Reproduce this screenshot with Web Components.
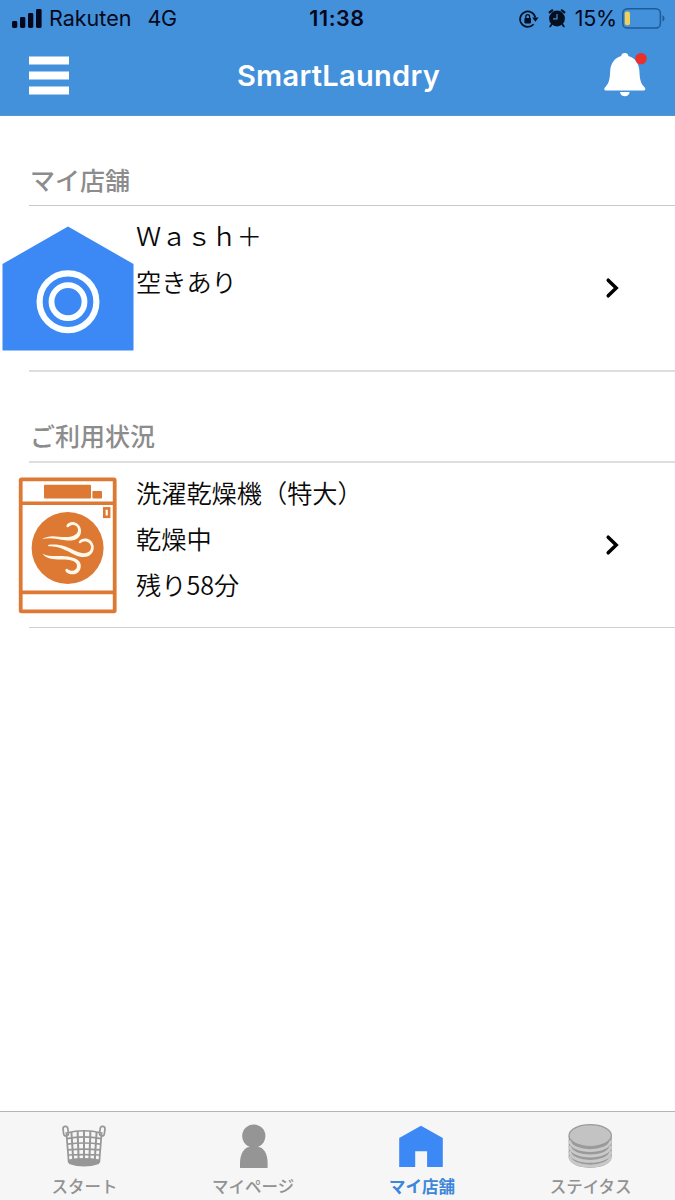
<!DOCTYPE html>
<html lang="ja">
<head>
<meta charset="utf-8">
<title>SmartLaundry</title>
<style>
   body {
      display: flex;
      flex-direction: column;

      height: 1200px;
      margin: 0;

      overflow: hidden;

      color: #0A0A0A;
      background-color: #FFFFFF;

      font-family: "Noto Sans CJK JP", sans-serif;
   }

   main {
      flex: 1;
   }

   .shops {
      --heading-rule: 1px solid #C8C8C8;
      --row-rule: 2px solid #DEDEDE;
   }

   .usage {
      --heading-rule: 2px solid #DEDEDE;
      --row-rule: 1px solid #D0D0D0;
   }
</style>
</head>
<body>
<status-bar carrier="Rakuten" network="4G" time="11:38" battery="15%"></status-bar>
<app-header>SmartLaundry</app-header>

<main>
   <list-section class="shops" heading="マイ店舗">
      <list-row>
         <app-icon slot="icon" name="shop" width="132" height="125"></app-icon>
         <div>Ｗａｓｈ＋</div>
         <div>空きあり</div>
      </list-row>
   </list-section>

   <list-section class="usage" heading="ご利用状況">
      <list-row>
         <app-icon slot="icon" name="dryer" width="100" height="137"></app-icon>
         <div>洗濯乾燥機（特大）</div>
         <div>乾燥中</div>
         <div>残り58分</div>
      </list-row>
   </list-section>
</main>

<tab-bar>
   <tab-item icon="basket">スタート</tab-item>
   <tab-item icon="person">マイページ</tab-item>
   <tab-item icon="home" active>マイ店舗</tab-item>
   <tab-item icon="coins">ステイタス</tab-item>
</tab-bar>

<script>
// All the drawings, by name
const ICONS = {
   signal: ["0 0 30 19", `
      <g fill="#03081C">
         <rect x="0" y="12" width="5.3" height="7" rx="1.4"/>
         <rect x="8" y="8" width="5.3" height="11" rx="1.4"/>
         <rect x="16" y="4" width="5.3" height="15" rx="1.4"/>
         <rect x="24" y="0" width="5.6" height="19" rx="1.4"/>
      </g>`],

   lock: ["0 0 20 18", `
      <path d="M16.3 7.5A7.7 7.7 0 1 0 14.6 14.2" fill="none" stroke="#04101F" stroke-width="1.7"/>
      <path d="M13.2 7.6H19.6L16.4 11.8Z" fill="#04101F"/>
      <rect x="5.4" y="8" width="6.6" height="5.4" rx=".8" fill="#04101F"/>
      <path d="M6.8 8.5V6.8a1.9 2.2 0 0 1 3.8 0V8.5" fill="none" stroke="#04101F" stroke-width="1.3"/>`],

   alarm: ["0 0 18 19", `
      <circle cx="9" cy="9.5" r="7.9" fill="#04101F"/>
      <path d="M1.6 3.4L4.2 1.3M16.4 3.4L13.8 1.3" stroke="#04101F" stroke-width="2.2" stroke-linecap="round"/>
      <path d="M4 14.8L2.2 17.4M14 14.8L15.8 17.4" stroke="#04101F" stroke-width="1.8" stroke-linecap="round"/>
      <path d="M9 5V9.8H5" fill="none" stroke="#4391DA" stroke-width="1.2"/>`],

   battery: ["0 0 43 21", `
      <rect x=".8" y=".8" width="37.6" height="19.2" rx="4.6" fill="none" stroke="#1D5A96" stroke-width="1.5"/>
      <path d="M40.5 7.2Q42.5 8 42.5 10.4T40.5 13.6Z" fill="#1D5A96"/>
      <rect x="2.8" y="3.6" width="5.2" height="13.6" rx="2" fill="#F0CF5A"/>`],

   menu: ["0 0 40 39", `
      <path d="M0 4.5H40M0 19.5H40M0 34.5H40" stroke="#FFFFFF" stroke-width="8"/>`],

   bell: ["0 0 44 44", `
      <path d="M20.8 0C18.6 0 17.5 1.3 17.2 2.9C10 5.1 6.6 10.8 6.2 17.8C5.9 26.5 4.8 31 .9 34.4C-.3 35.6 .2 37.5 2 37.5H39.6C41.4 37.5 41.9 35.6 40.7 34.4C36.8 31 35.7 26.5 35.4 17.8C35 10.8 31.6 5.1 24.4 2.9C24.1 1.3 23 0 20.8 0Z" fill="#FFFFFF"/>
      <path d="M16 38.9H25.6Q24.8 43.3 20.8 43.3T16 38.9Z" fill="#FFFFFF"/>
      <circle cx="37" cy="5.6" r="5.7" fill="#E9302D"/>`],

   shop: ["0 0 132 125", `
      <path d="M66 .5L131.5 38V124.5H.5V38Z" fill="#3C89F5"/>
      <g fill="none" stroke="#FAFEFF">
         <circle cx="66" cy="75.7" r="28.4" stroke-width="6.2"/>
         <circle cx="66" cy="75.7" r="16.5" stroke-width="5.8"/>
      </g>`],

   dryer: ["0 0 100 137", `
      <rect x="2.7" y="2.4" width="94" height="132" rx=".8" fill="#FFFFFF" stroke="#DD7933" stroke-width="3.8"/>
      <path d="M2 26.2H97M2 115.4H97" stroke="#DD7933" stroke-width="3.6"/>
      <rect x="26" y="7.7" width="47" height="13.8" rx="1" fill="#DD7933"/>
      <rect x="74.4" y="14" width="9.6" height="7.6" rx=".8" fill="#DD7933"/>
      <rect x="86.3" y="31.4" width="4.8" height="8.4" fill="#FFFFFF" stroke="#DD7933" stroke-width="2.6"/>
      <circle cx="49.6" cy="71" r="36" fill="#DD7933"/>
      <g fill="#FFF8E8">
         <path d="M24 62.3C32 57 39 60 47 60.1C56 60.3 60.3 56.5 60 52.4C59.7 48.2 54.2 46.5 50.8 49.8C50 50.7 48 50 48.4 48.7C49.7 45.2 53.8 44.3 57 45.4C62 47.2 64.2 52.5 62.5 57.2C60.2 63.4 53.5 64.2 47.3 63.3C39 62.1 32 59.9 24 62.3Z"/>
         <path d="M30.6 67.7C42 66.7 49 69.5 57 73.7C65 77.9 72.7 76.7 73 70.6C73.2 65.5 67.3 62.7 62.7 66C61.8 66.7 60.3 65.8 60.8 64.7C63.1 60.7 69.2 60.6 72.5 63.4C76.5 66.7 76.8 72.6 73.7 76.5C69.9 81.4 62.5 80.7 56.5 77.7C48 73.2 41 68.9 30.6 69.2Q29.3 68.5 30.6 67.7Z"/>
         <path d="M24.4 76.4C31 80.3 39 78.4 47 79.2C56 79.8 62.7 82.6 62.8 88.5C63 94.5 58.2 98.2 53 97.2C49.3 96.6 46.5 94.3 47.6 92.5C48.2 91.2 49.6 92 50.4 92.8C54 95.2 59 93.3 59 88.7C59 84.3 53 82.8 47 82.5C38 82.2 29 83.1 24.4 76.4Z"/>
      </g>`],

   chevron: ["0 0 13 20", `
      <path d="M2.2 2.2L10.2 10L2.2 17.8" fill="none" stroke="#000000" stroke-width="3.5" stroke-linecap="round"/>`],

   basket: ["0 0 44 44", `
      <g fill="none" stroke="#979797" stroke-width="1.7">
         <rect x="1.3" y="2.4" width="4.8" height="9.6" rx="2.4" transform="rotate(-8 3.7 7)"/>
         <rect x="37.9" y="2.4" width="4.8" height="9.6" rx="2.4" transform="rotate(8 40.3 7)"/>
         <path d="M4.4 9Q22 4.5 39.6 9L37.3 38Q22 43 6.7 38Z"/>
         <path d="M4.8 14.6Q22 11 39.2 14.6M5.3 20.2Q22 17.8 38.7 20.2M5.8 25.8Q22 24.6 38.2 25.8M6.2 31Q22 30.4 37.8 31"/>
         <path d="M9.4 8L11.4 38M15.6 7L16.7 38M22 6.5V38M28.4 7L27.3 38M34.6 8L32.6 38" stroke-width="2"/>
      </g>
      <path d="M6.4 35.4Q22 32.8 37.6 35.4L37 40Q22 45 7 40Z" fill="#979797"/>`],

   person: ["0 0 44 44", `
      <circle cx="22.8" cy="12" r="11.6" fill="#959595"/>
      <path d="M9 44V39C9 29 14 23 18.6 23H27C32 23 36.6 29 36.6 39V44Z" fill="#959595"/>`],

   home: ["0 0 44 44", `
      <path d="M21 1.8L42.8 14V43H27.1V27.2H15.2V43H-.8V14Z" fill="#3C89F5"/>`],

   coins: ["0 0 44 44", `
      <path d="M-.3 12V32.6C-.3 47.6 42.7 47.6 42.7 32.6V12Z" fill="#9A9A9A"/>
      <g fill="none" stroke="#C9C9C9" stroke-width="2.8">
         <path d="M.5 16.4C2.3 30 40.1 30 41.9 16.4"/>
         <path d="M.5 21.8C2.3 35.4 40.1 35.4 41.9 21.8"/>
         <path d="M.5 27.2C2.3 40.8 40.1 40.8 41.9 27.2"/>
         <path d="M.5 32.2C2.3 45.4 40.1 45.4 41.9 32.2"/>
      </g>
      <ellipse cx="21.2" cy="11.6" rx="21.2" ry="10.9" fill="#C3C3C3" stroke="#9A9A9A" stroke-width="1.2"/>`],
};

// Drawing of a fixed size
class AppIcon extends HTMLElement {
   connectedCallback() {
      const [box, shapes] = ICONS[this.getAttribute("name")];
      const width  = this.getAttribute("width");
      const height = this.getAttribute("height");

      this.attachShadow({ mode: "open" }).innerHTML = `
         <style>
            :host {
               display: block;
               flex: none;
            }

            svg {
               display: block;
               overflow: visible;
            }
         </style>
         <svg width="${width}" height="${height}" viewBox="${box}">${shapes}</svg>
      `;
   }
}

// Phone status
class StatusBar extends HTMLElement {
   connectedCallback() {
      this.attachShadow({ mode: "open" }).innerHTML = `
         <style>
            :host {
               display: grid;
               grid-template-columns: 1fr auto 1fr;
               align-items: center;

               height: 37px;
               padding: 0 10px 0 12px;

               color: #03081C;
               background-color: #4391DA;

               font: 21.5px/37px Inter, sans-serif;
            }

            div {
               display: flex;
               align-items: center;
            }

            .carrier {
               margin-left: 7px;
            }

            .network {
               margin-left: 16px;
               letter-spacing: -0.3px;
            }

            .time {
               margin-right: 3px;
               font-weight: 600;
               letter-spacing: 0.6px;
            }

            .right {
               justify-content: flex-end;
            }

            .battery {
               margin: 0 5px 0 9px;
               letter-spacing: -0.2px;
            }

            .alarm {
               margin-left: 9px;
            }
         </style>
         <div>
            <app-icon name="signal" width="30" height="19"></app-icon>
            <span class="carrier">${this.getAttribute("carrier")}</span>
            <span class="network">${this.getAttribute("network")}</span>
         </div>
         <span class="time">${this.getAttribute("time")}</span>
         <div class="right">
            <app-icon name="lock" width="20" height="18"></app-icon>
            <app-icon class="alarm" name="alarm" width="18" height="19"></app-icon>
            <span class="battery">${this.getAttribute("battery")}</span>
            <app-icon name="battery" width="43" height="21"></app-icon>
         </div>
      `;
   }
}

// Title with the menu and the bell
class AppHeader extends HTMLElement {
   connectedCallback() {
      this.attachShadow({ mode: "open" }).innerHTML = `
         <style>
            :host {
               display: grid;
               grid-template-columns: 1fr auto 1fr;
               align-items: center;

               box-sizing: border-box;
               height: 79px;
               padding: 0 27px 2px 29px;

               color: #FFFFFF;
               background-color: #4391DA;
               border-bottom: 1px solid #5F93C4;

               font: 600 29px/40px Inter, sans-serif;
               letter-spacing: 0.3px;
            }

            span {
               padding-top: 1px;
            }

            .bell {
               justify-self: end;
            }
         </style>
         <app-icon name="menu" width="40" height="39"></app-icon>
         <span><slot></slot></span>
         <app-icon class="bell" name="bell" width="44" height="44"></app-icon>
      `;
   }
}

// Heading over ruled rows
class ListSection extends HTMLElement {
   connectedCallback() {
      this.attachShadow({ mode: "open" }).innerHTML = `
         <style>
            :host {
               display: block;
               padding-top: 39px;
            }

            h2 {
               height: 50px;
               margin: 0 0 0 29px;
               padding-left: 1px;

               color: #8C8C8C;
               border-bottom: var(--heading-rule);

               font-size: 25px;
               font-weight: 500;
               line-height: 48px;
            }
         </style>
         <h2>${this.getAttribute("heading")}</h2>
         <slot></slot>
      `;
   }
}

// Picture, lines of text and an arrow
class ListRow extends HTMLElement {
   connectedCallback() {
      this.attachShadow({ mode: "open" }).innerHTML = `
         <style>
            :host {
               display: grid;
               grid-template-columns: 136px 1fr auto;
               grid-template-rows: 164px auto;

               font-size: 25.2px;
               font-weight: 350;
               line-height: 46px;
            }

            .icon {
               display: flex;
               align-items: center;
               justify-content: center;
            }

            .text {
               padding-top: 6px;
            }

            .arrow {
               align-self: center;
               margin-right: 56px;
            }

            .rule {
               grid-column: 1 / -1;
               margin-left: 29px;
               border-top: var(--row-rule);
            }
         </style>
         <div class="icon"><slot name="icon"></slot></div>
         <div class="text"><slot></slot></div>
         <app-icon class="arrow" name="chevron" width="13" height="20"></app-icon>
         <div class="rule"></div>
      `;
   }
}

// Bottom navigation
class TabBar extends HTMLElement {
   connectedCallback() {
      this.attachShadow({ mode: "open" }).innerHTML = `
         <style>
            :host {
               display: grid;
               grid-template-columns: repeat(4, 1fr);

               height: 88px;

               background-color: #F6F6F6;
               border-top: 1px solid #B4B6B2;
            }
         </style>
         <slot></slot>
      `;
   }
}

class TabItem extends HTMLElement {
   connectedCallback() {
      this.attachShadow({ mode: "open" }).innerHTML = `
         <style>
            :host {
               display: flex;
               flex-direction: column;
               align-items: center;

               padding-top: 12px;

               color: #929292;

               font-size: 16.5px;
               font-weight: 500;
               line-height: 24px;
            }

            :host([active]) {
               color: #3D87DA;
               font-weight: 700;
            }

            span {
               margin-top: 6px;
            }
         </style>
         <app-icon name="${this.getAttribute("icon")}" width="44" height="44"></app-icon>
         <span><slot></slot></span>
      `;
   }
}

customElements.define("app-icon", AppIcon);
customElements.define("status-bar", StatusBar);
customElements.define("app-header", AppHeader);
customElements.define("list-section", ListSection);
customElements.define("list-row", ListRow);
customElements.define("tab-bar", TabBar);
customElements.define("tab-item", TabItem);
</script>
</body>
</html>
